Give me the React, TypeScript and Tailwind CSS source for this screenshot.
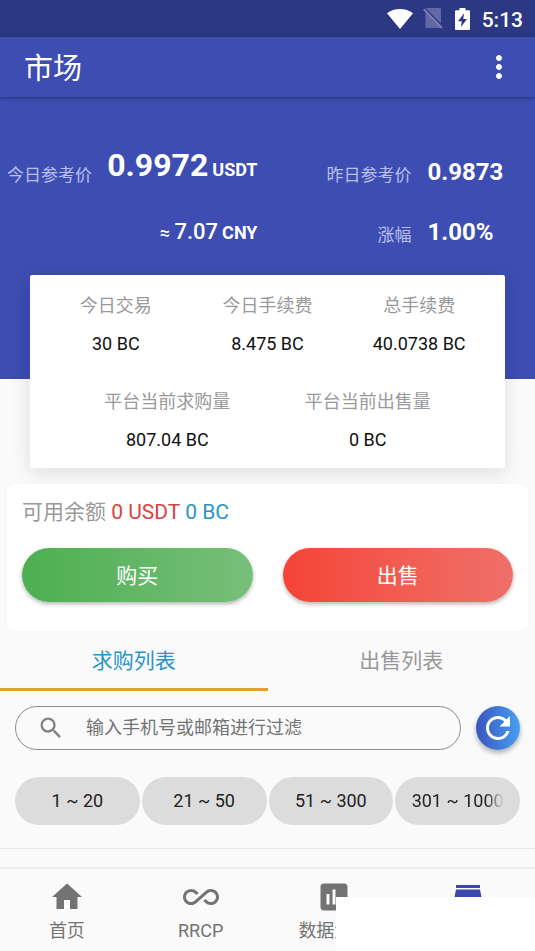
import clsx from "clsx";
import { useState } from "react";
import {
  MdAllInclusive,
  MdAssessment,
  MdHome,
  MdMoreVert,
  MdRefresh,
  MdSearch
} from "react-icons/md";

interface StatProps {
  label: string;
  value: string;
}

const todayStats: StatProps[] = [
  { label: "今日交易", value: "30 BC" },
  { label: "今日手续费", value: "8.475 BC" },
  { label: "总手续费", value: "40.0738 BC" }
];

const platformStats: StatProps[] = [
  { label: "平台当前求购量", value: "807.04 BC" },
  { label: "平台当前出售量", value: "0 BC" }
];

const tabs = ["求购列表", "出售列表"];

const ranges = ["1 ~ 20", "21 ~ 50", "51 ~ 300", "301 ~ 1000"];

function Stat({ label, value }: StatProps) {
  return (
    <div className="flex flex-col items-center gap-2.5 text-lg leading-7">
      <span className="text-[#999999]">{label}</span>
      <span className="text-[#111111]">{value}</span>
    </div>
  );
}

function StatusBar() {
  return (
    <div className="flex h-[37px] items-center justify-end bg-[#2c3883] pr-3 text-white">
      <svg className="h-5 w-[26px]" viewBox="0 0 26 20" fill="currentColor">
        <path d="M13 20 0 4.2C3.600 1.500 8 0 13 0s9.400 1.500 13 4.200z" />
      </svg>
      <svg className="ml-2.5 h-[21px] w-5" viewBox="0 0 20 21">
        <path
          d="M3 0H17a1 1 0 0 1 1 1V15.500L3.500 1.200zM2.500 4l14.800 15.500c-.3.400-.8.500-1.300.500H3.500a1 1 0 0 1-1-1z"
          fill="#6169a5"
        />
        <path d="M.6 1.200 19 20" stroke="#7d84b5" strokeWidth="1.800" />
      </svg>
      <svg className="ml-3 h-[22px] w-[15px]" viewBox="0 0 15 22">
        <path
          d="M4.500 0h6v2.200H14a1 1 0 0 1 1 1V21a1 1 0 0 1-1 1H1a1 1 0 0 1-1-1V3.200a1 1 0 0 1 1-1h3.500z"
          fill="currentColor"
        />
        <path d="M9 5.200 3 13.200h3.700L6 19l6-8H8.300z" fill="#2c3883" />
      </svg>
      <span className="ml-3 pt-0.5 text-[21px] leading-6 font-medium">5:13</span>
    </div>
  );
}

function StoreIcon() {
  return (
    <svg className="h-9 w-9" viewBox="0 0 24 24" fill="currentColor">
      <path d="M20 4H4v2h16V4zm1 10v-2l-1-5H4l-1 5v2h1v6h10v-6h4v6h2v-6h1zm-9 4H6v-4h6v4z" />
    </svg>
  );
}

const navItems = [
  { label: "首页", icon: <MdHome className="h-9 w-9" /> },
  { label: "RRCP", icon: <MdAllInclusive className="h-9 w-9" /> },
  { label: "数据大厅", icon: <MdAssessment className="h-9 w-9" /> },
  { label: "市场", icon: <StoreIcon />, active: true }
];

export default function App() {
  const [activeTab, setActiveTab] = useState(0);
  const [keyword, setKeyword] = useState("");

  return (
    <div className="relative flex min-h-screen flex-col overflow-hidden bg-[#fafafa] font-['Roboto','Noto_Sans_CJK_SC',sans-serif]">
      <StatusBar />

      <header className="z-10 flex h-[60px] items-center justify-between bg-[#3d4db1] pr-[18px] pl-6 text-white shadow-[0_1px_4px_rgba(0,0,0,0.35)]">
        <h1 className="pt-1 text-[29px] leading-9">市场</h1>
        <button type="button" aria-label="更多">
          <MdMoreVert className="h-9 w-9" />
        </button>
      </header>

      {/* Reference prices */}
      <section className="bg-[#3d4db1] pt-[46px] pb-[131px] text-white">
        <div className="grid grid-cols-2 items-baseline">
          <div className="flex items-center justify-between pr-2.5 pl-[7px] whitespace-nowrap">
            <span className="pt-5 text-[17px] leading-6 text-[#b9c0ee]">
              今日参考价
            </span>
            <span className="font-bold">
              <span className="text-[32px] leading-10">0.9972</span>
              <span className="ml-1 text-lg">USDT</span>
            </span>
          </div>
          <div className="flex items-center gap-4">
            <span className="w-36 pt-1.5 text-right text-[17px] leading-6 text-[#b9c0ee]">
              昨日参考价
            </span>
            <span className="text-2xl font-bold">0.9873</span>
          </div>
        </div>
        <div className="mt-7 grid grid-cols-2 items-center">
          <div className="pr-2.5 text-right">
            <span className="text-lg font-medium">≈ </span>
            <span className="text-[22px] leading-8 font-medium">7.07</span>
            <span className="ml-1 text-lg font-bold">CNY</span>
          </div>
          <div className="flex items-center gap-4">
            <span className="w-36 pt-1.5 text-right text-[17px] leading-6 text-[#b9c0ee]">
              涨幅
            </span>
            <span className="text-2xl font-bold">1.00%</span>
          </div>
        </div>
      </section>

      <section className="z-10 mx-[30px] -mt-26 rounded-xs bg-white pt-[17px] pb-3.5 shadow-[0_4px_20px_rgba(0,0,0,0.12)]">
        <div className="grid grid-cols-3 px-2.5">
          {todayStats.map(stat => (
            <Stat key={stat.label} {...stat} />
          ))}
        </div>
        <div className="mt-[30px] flex justify-evenly">
          {platformStats.map(stat => (
            <Stat key={stat.label} {...stat} />
          ))}
        </div>
      </section>

      {/* Balance */}
      <section className="z-10 mx-[7px] mt-4 rounded-lg bg-white px-[15px] pt-3 pb-[29px] shadow-[0_0_6px_rgba(0,0,0,0.03)]">
        <p className="text-[21px] leading-8 text-[#999999]">
          可用余额 <span className="text-[#d9433f]">0 USDT</span>{" "}
          <span className="text-[#2b94c6]">0 BC</span>
        </p>
        <div className="mt-5 grid grid-cols-2 gap-[30px] text-[21px] text-white">
          <button
            type="button"
            className="h-[54px] rounded-full bg-linear-to-r from-[#4caf50] to-[#77bf7a] pt-1 shadow-[0_2px_4px_rgba(0,0,0,0.3)]"
          >
            购买
          </button>
          <button
            type="button"
            className="h-[54px] rounded-full bg-linear-to-r from-[#f44336] to-[#ee7069] pt-1 shadow-[0_2px_4px_rgba(0,0,0,0.3)]"
          >
            出售
          </button>
        </div>
      </section>

      <div role="tablist" className="grid grid-cols-2">
        {tabs.map((tab, index) => (
          <button
            key={tab}
            type="button"
            role="tab"
            aria-selected={activeTab === index}
            onClick={() => setActiveTab(index)}
            className={clsx("h-[60px] border-b-3 pt-1 text-[21px]", {
              "border-[#e0a02a] text-[#2b94c6]": activeTab === index,
              "border-transparent text-[#999999]": activeTab !== index
            })}
          >
            {tab}
          </button>
        ))}
      </div>

      {/* Filter */}
      <div className="mt-[15px] flex gap-[15px] px-[15px]">
        <label className="flex h-11 min-w-0 flex-1 items-center rounded-full border border-[#8c8c8c] pr-4 pl-[21px]">
          <MdSearch className="h-7 w-7 shrink-0 text-[#808080]" />
          <input
            type="text"
            aria-label="输入手机号或邮箱进行过滤"
            placeholder="输入手机号或邮箱进行过滤"
            value={keyword}
            onChange={e => setKeyword(e.target.value)}
            className="ml-[21px] min-w-0 flex-1 text-lg text-[#222222] outline-none placeholder:text-[#737373]"
          />
        </label>
        <button
          type="button"
          aria-label="刷新"
          className="flex h-11 w-11 items-center justify-center rounded-full bg-linear-to-r from-[#3a56bd] to-[#479ff0] text-white shadow-[0_3px_5px_rgba(0,0,0,0.3)]"
        >
          <MdRefresh className="h-9 w-9" />
        </button>
      </div>

      <div className="mt-[27px] grid grid-cols-4 gap-0.5 px-[15px]">
        {ranges.map(range => (
          <button
            key={range}
            type="button"
            className="h-12 rounded-full bg-[#dcdcdc] px-4 text-lg text-[#222222]"
          >
            <span
              className={clsx("block whitespace-nowrap", {
                "mask-r-from-80%": range.length > 8
              })}
            >
              {range}
            </span>
          </button>
        ))}
      </div>

      <hr className="mt-[23px] border-[#e6e6e6]" />

      <nav className="mt-auto grid h-[84px] grid-cols-4 border-t-2 border-[#efefef] pt-2.5">
        {navItems.map(item => (
          <a
            key={item.label}
            href="#"
            className={clsx("flex flex-col items-center gap-0.5", {
              "text-[#3949ab]": item.active,
              "text-[#737373]": !item.active
            })}
          >
            {item.icon}
            <span className="text-lg leading-7">{item.label}</span>
          </a>
        ))}
      </nav>

      <div className="absolute right-0 bottom-0 z-20 h-[54px] w-[199px] bg-white" />
    </div>
  );
}
